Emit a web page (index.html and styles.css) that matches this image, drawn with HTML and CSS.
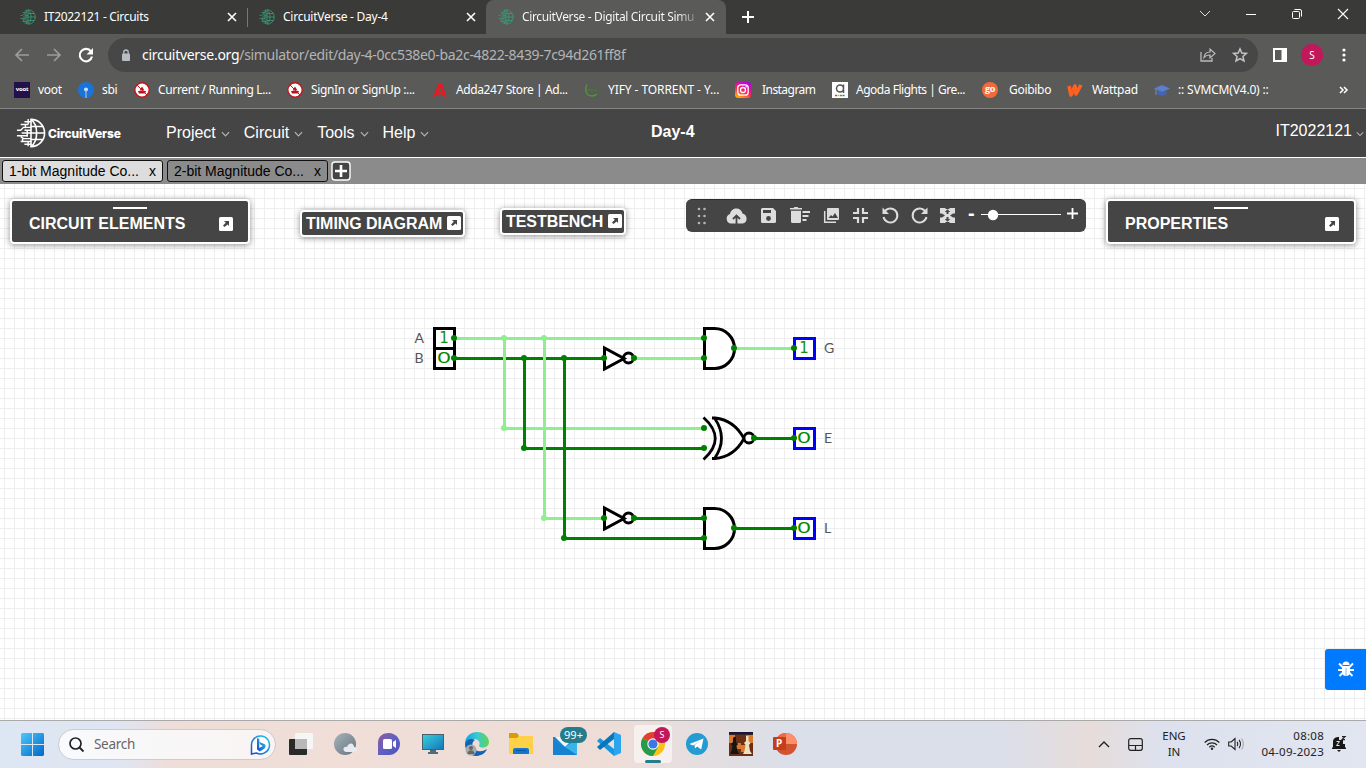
FILE: index.html
```html
<!DOCTYPE html>
<html lang="en">
<head>
<meta charset="utf-8">
<title>CircuitVerse - Digital Circuit Simulator</title>
<link rel="stylesheet" href="styles.css">
</head>
<body>
<svg class="defs" width="0" height="0">
  <symbol id="globe" viewBox="0 0 32 32">
    <g fill="none" stroke="currentColor" stroke-width="1.7">
      <path d="M16 1.5a14.5 14.5 0 0 1 0 29zM16 1.5c8 6 8 23 0 29M16 9h13M16 16h15M16 23h13"/>
      <path d="M16 4H9M13 7H5M16 10H8L5 13H1M16 13H9M16 16H6M12 19H1M16 22H8l-3-2M16 25H5M16 28H9M13 1v6M10 7v4M12 13v7M7 22v3M13 25v5" stroke-width="1.5"/>
    </g>
  </symbol>
  <symbol id="x" viewBox="0 0 10 10"><path d="M1 1l8 8M9 1L1 9" stroke="currentColor" stroke-width="1.6"/></symbol>
  <symbol id="chev" viewBox="0 0 10 6"><path d="M1 1l4 4 4-4" fill="none" stroke="currentColor" stroke-width="1.3"/></symbol>
  <symbol id="open" viewBox="0 0 14 14"><rect width="14" height="14" rx="1.5" fill="#fff"/><path d="M5 4h5v5L8.600 7.600 5.500 10 4 8.500 6.800 5.800z" fill="#454545"/></symbol>
  <symbol id="nosign" viewBox="0 0 16 16"><circle cx="8" cy="8" r="7.200" fill="#fff" stroke="#c4161c" stroke-width="1.400"/><path d="M4 9h8l-1 2.500H5zM5.500 8.500l2.500-4 2.500 4z" fill="#b5161b"/><path d="M3 3l10 10" stroke="#c4161c" stroke-width="1"/></symbol>
  <symbol id="not" viewBox="0 0 34 26"><path d="M2 2.500v21l19.500-10.500z" fill="#fff" stroke="#000" stroke-width="3"/><circle cx="26" cy="12.500" r="5" fill="none" stroke="#000" stroke-width="3"/></symbol>
  <symbol id="and" viewBox="0 0 34 44"><path d="M2.500 2.500h10a20 20 0 0 1 0 40h-10z" fill="#fff" stroke="#000" stroke-width="3"/></symbol>
</svg>

<div class="tabs">
  <div class="tab"><svg class="fav"><use href="#globe"/></svg><span class="tt t1">IT2022121 - Circuits</span><svg class="close"><use href="#x"/></svg></div>
  <div class="tab second"><svg class="fav"><use href="#globe"/></svg><span class="tt t2">CircuitVerse - Day-4</span><svg class="close"><use href="#x"/></svg></div>
  <div class="tab active"><svg class="fav"><use href="#globe"/></svg><span class="tt fade">CircuitVerse - Digital Circuit Simu</span><svg class="close"><use href="#x"/></svg></div>
  <svg class="newtab" viewBox="0 0 12 12"><path d="M6 0v12M0 6h12" stroke="#fff" stroke-width="2"/></svg>
  <div class="win">
    <svg width="12" height="8" viewBox="0 0 12 8"><path d="M1 1l5 5 5-5" fill="none" stroke="#ddd"/></svg>
    <svg width="10" height="10" viewBox="0 0 10 10"><path d="M0 5.500h10" stroke="#fff"/></svg>
    <svg width="10" height="10" viewBox="0 0 10 10"><rect x=".5" y="2.500" width="7" height="7" rx="1" fill="none" stroke="#fff"/><path d="M2.500 .5H8a1.500 1.500 0 0 1 1.500 1.500v5.500" fill="none" stroke="#fff"/></svg>
    <svg width="10" height="10" viewBox="0 0 10 10"><path d="M0 0l10 10M10 0L0 10" stroke="#fff" stroke-width="1.100"/></svg>
  </div>
</div>

<div class="nav">
  <svg class="arr" viewBox="0 0 16 14"><path d="M15 7H2M8 1L2 7l6 6" fill="none" stroke="#9c9c9b" stroke-width="1.700"/></svg>
  <svg class="arr" viewBox="0 0 16 14"><path d="M1 7h13M8 1l6 6-6 6" fill="none" stroke="#9c9c9b" stroke-width="1.700"/></svg>
  <svg class="arr" viewBox="0 0 16 16"><path d="M13 4.500A6.200 6.200 0 1 0 14 9.500" fill="none" stroke="#fff" stroke-width="2.100"/><path d="M15 1v6.500H8.500z" fill="#fff"/></svg>
  <div class="address">
    <svg width="8" height="12" viewBox="0 0 8 12"><rect y="4.500" width="8" height="7.500" rx="1" fill="#b9bcc1"/><path d="M1.800 5V3.200a2.200 2.200 0 0 1 4.400 0V5" fill="none" stroke="#b9bcc1" stroke-width="1.300"/></svg>
    <span class="url"><b>circuitverse.org</b>/simulator/edit/day-4-0cc538e0-ba2c-4822-8439-7c94d261ff8f</span>
    <svg class="share" width="16" height="14" viewBox="0 0 16 14"><path d="M1 4v9h11v-3" fill="none" stroke="#bbb" stroke-width="1.300"/><path d="M4 9.500c.5-4 3-5.500 6-5.500V1l5 4.500L10 10V7C7.500 7 5.500 7.500 4 9.500z" fill="none" stroke="#bbb" stroke-width="1.200"/></svg>
    <svg width="16" height="16" viewBox="0 0 16 16"><path d="M8 1.800l1.800 4.200 4.600.4-3.500 3 1.100 4.500L8 11.500l-4 2.400 1.100-4.500-3.500-3 4.600-.4z" fill="none" stroke="#c4c4c4" stroke-width="1.500"/></svg>
  </div>
  <svg class="side" viewBox="0 0 14 14"><path d="M0 0h14v14H0zM2 2v10h6.500V2z" fill="#fff" fill-rule="evenodd"/></svg>
  <span class="avatar">S</span>
  <svg class="dots" viewBox="0 0 4 14"><g fill="#fff"><circle cx="2" cy="2" r="1.600"/><circle cx="2" cy="7" r="1.600"/><circle cx="2" cy="12" r="1.600"/></g></svg>
</div>

<div class="bookmarks">
  <div class="bm"><span class="voot">voot</span><span>voot</span></div>
  <div class="bm"><svg viewBox="0 0 16 16"><circle cx="8" cy="8" r="8" fill="#1a73d9"/><circle cx="8" cy="7.500" r="2" fill="#cfe2f5"/><path d="M8 8v8" stroke="#a9bccf" stroke-width="1.200"/></svg><span>sbi</span></div>
  <div class="bm"><svg viewBox="0 0 16 16"><use href="#nosign"/></svg><span class="b3">Current / Running L...</span></div>
  <div class="bm"><svg viewBox="0 0 16 16"><use href="#nosign"/></svg><span class="b4">SignIn or SignUp :...</span></div>
  <div class="bm"><svg viewBox="0 0 16 16"><path d="M6.500 1h3.500l5 15-6.500-4L1 15.500zM8.500 6l-2 5 2-1 2.300 1z" fill="#e31b23" fill-rule="evenodd"/></svg><span class="b5">Adda247 Store | Ad...</span></div>
  <div class="bm"><svg viewBox="0 0 16 16"><path d="M3 2.500c-3 5-1 11.500 5 11.500 3 0 4-1 5-2" fill="none" stroke="#4b9a35" stroke-width="1.300"/><path d="M4 10V7l2 2V7M8 10V6M10 10l1-3 2 3" stroke="#427d30" fill="none"/></svg><span class="b6">YIFY - TORRENT - Y...</span></div>
  <div class="bm wide"><svg viewBox="0 0 16 16"><defs><linearGradient id="ig" x1="0.200" y1="1" x2=".7" y2="0"><stop stop-color="#ffb800"/><stop offset=".45" stop-color="#ff2458"/><stop offset="1" stop-color="#b900e6"/></linearGradient></defs><rect width="16" height="16" rx="3.500" fill="url(#ig)"/><g fill="none" stroke="#fff" stroke-width="1.300"><rect x="2.800" y="2.800" width="10.400" height="10.400" rx="3"/><circle cx="8" cy="8" r="2.500"/></g><circle cx="11.200" cy="4.800" r=".8" fill="#fff"/></svg><span class="b7">Instagram</span></div>
  <div class="bm"><svg viewBox="0 0 16 16"><rect width="16" height="16" fill="#fff"/><path d="M11.500 2.500v8.500M11.500 6.500a3.500 3.500 0 1 1-7 0 3.500 3.500 0 0 1 7 0z" fill="none" stroke="#555" stroke-width="1.500"/><path d="M3 13.500h2" stroke="#e33" stroke-width="1.500"/><path d="M5.500 13.500h2" stroke="#fa0" stroke-width="1.500"/><path d="M8 13.500h2" stroke="#3a4" stroke-width="1.500"/><path d="M10.500 13.500h2" stroke="#36c" stroke-width="1.500"/></svg><span class="b8">Agoda Flights | Gre...</span></div>
  <div class="bm wide"><span class="go">go</span><span>Goibibo</span></div>
  <div class="bm watt"><svg viewBox="0 0 16 16"><path d="M2 4l2 9 4-9 1 8 5-9" fill="none" stroke="#ff6122" stroke-width="3.600" stroke-linejoin="round"/></svg><span>Wattpad</span></div>
  <div class="bm"><svg viewBox="0 0 16 16"><path d="M0 6.500L8 3l8 3.500L8 10z" fill="#5b7ed0"/><path d="M3.500 8.500v3.500c2 2 7 2 9 0V8.500L8 10.500z" fill="#4465b4"/><path d="M2 7v6" stroke="#7c8baa"/></svg><span class="b11">:: SVMCM(V4.0) ::</span></div>
  <svg class="more" viewBox="0 0 10 8"><path d="M1 1l3 3-3 3M5 1l3 3-3 3" fill="none" stroke="#fff" stroke-width="1.500"/></svg>
</div>

<header class="header">
  <svg class="logo"><use href="#globe"/></svg><span class="brand">CircuitVerse</span>
  <nav class="menu"><span>Project<svg><use href="#chev"/></svg></span><span>Circuit<svg><use href="#chev"/></svg></span><span>Tools<svg><use href="#chev"/></svg></span><span>Help<svg><use href="#chev"/></svg></span></nav>
  <strong class="title">Day-4</strong>
  <span class="user">IT2022121<svg><use href="#chev"/></svg></span>
</header>

<div class="circuits">
  <div class="ctab current"><span>1-bit Magnitude Co...</span><span>x</span></div>
  <div class="ctab"><span>2-bit Magnitude Co...</span><span>x</span></div>
  <svg class="add" viewBox="0 0 20 20"><rect x="1" y="1" width="18" height="18" rx="3" fill="#454545" stroke="#fff" stroke-width="1.400"/><path d="M10 4v12M4 10h12" stroke="#fff" stroke-width="2.600"/></svg>
</div>

<main class="canvas">
  <svg class="circuit" width="1366" height="536" viewBox="0 184 1366 536">
    <g fill="none" stroke-width="3">
      <path stroke="#008000" d="M454 358.500H604M524 448.500H704"/>
      <path stroke="#90ee90" d="M454 338.500H704M504.500 338V428.500H704M544.500 338V518.500H604M634 358.500H704M734 348.500H794"/>
      <path stroke="#008000" d="M524.500 358V449M564.500 358V538.500H704M754 438.500H794M634 518.500H704M734 528.500H794"/>
    </g>
    <g fill="#fff" stroke="#000" stroke-width="3"><path d="M434.500 328.500h20v20h-20zM434.500 348.500h20v20h-20z"/></g>
    <path fill="#fff" stroke="#0000ff" stroke-width="3" d="M794.500 338.500h20v20h-20zM794.500 428.500h20v20h-20zM794.500 518.500h20v20h-20z"/>
    <use href="#not" x="602.500" y="345.500" width="34" height="26"/><use href="#not" x="602.500" y="505.500" width="34" height="26"/>
    <use href="#and" x="702" y="326" width="34" height="44"/><use href="#and" x="702" y="506" width="34" height="44"/>
    <path d="M712 418H715Q734 420 744 438.500Q734 457 715 458.500H712M714.500 418Q728.500 438.500 714.500 458.500M703.500 417.500Q727 438.500 703.500 459.500" fill="none" stroke="#000" stroke-width="2.800"/>
    <circle cx="749" cy="438" r="5" fill="#fff" stroke="#000" stroke-width="2.800"/>
    <g fill="#90ee90"><circle cx="504" cy="338" r="3"/><circle cx="544" cy="338" r="3"/><circle cx="504" cy="428" r="3"/><circle cx="544" cy="518" r="3"/></g>
    <g fill="#008000">
      <circle cx="454" cy="338" r="3"/><circle cx="454" cy="358" r="3"/><circle cx="524" cy="358" r="3"/><circle cx="564" cy="358" r="3"/><circle cx="524" cy="448" r="3"/><circle cx="564" cy="538" r="3"/>
      <circle cx="604" cy="358" r="3"/><circle cx="634" cy="358" r="3"/><circle cx="604" cy="518" r="3"/><circle cx="634" cy="518" r="3"/>
      <circle cx="704" cy="338" r="3"/><circle cx="704" cy="358" r="3"/><circle cx="704" cy="428" r="3"/><circle cx="704" cy="448" r="3"/><circle cx="704" cy="518" r="3"/><circle cx="704" cy="538" r="3"/>
      <circle cx="734" cy="348" r="3"/><circle cx="754" cy="438" r="3"/><circle cx="734" cy="528" r="3"/><circle cx="794" cy="348" r="3"/><circle cx="794" cy="438" r="3"/><circle cx="794" cy="528" r="3"/>
    </g>
    <g class="bits"><text x="444" y="343">1</text><text x="804" y="353">1</text></g>
    <g class="bits zero"><text x="437.500" y="363" textLength="13" lengthAdjust="spacingAndGlyphs">0</text><text x="797.500" y="443" textLength="13" lengthAdjust="spacingAndGlyphs">0</text><text x="797.500" y="533" textLength="13" lengthAdjust="spacingAndGlyphs">0</text></g>
    <g class="names"><text x="414.500" y="343">A</text><text x="414.500" y="363">B</text><text x="824" y="353">G</text><text x="824" y="443">E</text><text x="824" y="533">L</text></g>
  </svg>

  <section class="panel elements"><i></i><span>CIRCUIT ELEMENTS</span><svg><use href="#open"/></svg></section>
  <section class="panel small timing"><span>TIMING DIAGRAM</span><svg><use href="#open"/></svg></section>
  <section class="panel small bench"><span>TESTBENCH</span><svg><use href="#open"/></svg></section>
  <section class="quick">
    <svg width="10" height="18" viewBox="0 0 10 18" fill="#b5b5b5"><circle cx="2" cy="2" r="1.300"/><circle cx="7.500" cy="2" r="1.300"/><circle cx="2" cy="9" r="1.300"/><circle cx="7.500" cy="9" r="1.300"/><circle cx="2" cy="16" r="1.300"/><circle cx="7.500" cy="16" r="1.300"/></svg>
    <svg width="21" height="16" viewBox="0 0 21 16"><path d="M5 15.500a4.900 4.900 0 0 1-1-9.500C4.500 2.500 7.500 .5 10.500.5c3 0 5.500 2 6 5 5.500 1 5.500 10 0 10z" fill="#ddd"/><path d="M10.500 16V8M7 11L10.500 7.500l3.500 3.500" fill="none" stroke="#454545" stroke-width="1.800"/></svg>
    <svg width="15" height="15" viewBox="0 0 15 15"><path d="M1.500 0H12l3 3v10.500a1.500 1.500 0 0 1-1.500 1.500h-12A1.500 1.500 0 0 1 0 13.500v-12A1.500 1.500 0 0 1 1.500 0zM2 2v3h8V2z" fill="#ddd" fill-rule="evenodd"/><circle cx="7.500" cy="10.500" r="2.400" fill="#454545"/></svg>
    <svg width="20" height="15" viewBox="0 0 20 15" fill="#ddd"><path d="M0 0h3.500l1-1h3l1 1H12v1.500H0zM1 2.800h10V13.500A1.500 1.500 0 0 1 9.500 15h-7A1.500 1.500 0 0 1 1 13.500zM12.500 3H20v2h-7.500zM12.500 7H18.500v2h-6zM12.500 11h4v2h-4z"/></svg>
    <svg width="15" height="15" viewBox="0 0 15 15"><rect x="3" width="12" height="12" rx="1" fill="#ddd"/><path d="M.7 3v11.300H12" fill="none" stroke="#ddd" stroke-width="1.500"/><path d="M4.500 10l2.500-3 1.500 1.500L11 5l3 5z" fill="#454545"/></svg>
    <svg width="15" height="15" viewBox="0 0 15 15"><path d="M5 0v5H0M10 0v5h5M5 15v-5H0M10 15v-5h5" fill="none" stroke="#ddd" stroke-width="2.200"/></svg>
    <svg width="17" height="17" viewBox="0 0 17 17"><path d="M2 5.500A7 7 0 1 1 1.500 10" fill="none" stroke="#ddd" stroke-width="2"/><path d="M.5.500v6.500H7z" fill="#ddd"/></svg>
    <svg width="17" height="17" viewBox="0 0 17 17"><path d="M15 5.500A7 7 0 1 0 15.500 10" fill="none" stroke="#ddd" stroke-width="2"/><path d="M16.500.500v6.500H10z" fill="#ddd"/></svg>
    <svg width="15" height="15" viewBox="0 0 15 15"><path d="M0 0h15v15H0z" fill="#ddd"/><path d="M7.500 1.300l2.700 2.700H8.500v2h-2V4H4.800zM7.500 13.700L4.800 11h1.700V9h2v2h1.700zM0 5.500h2v4H0zM13 5.500h2v4h-2zM2 5.500l3 2-3 2zM13 5.500l-3 2 3 2zM5.500 0h4v1h-4zM5.500 14h4v1h-4z" fill="#454545"/></svg>
    <b>-</b>
    <svg width="80" height="12" viewBox="0 0 80 12"><path d="M0 6.500h80" stroke="#fff"/><circle cx="12" cy="7" r="5.200" fill="#fff"/></svg>
    <svg width="11" height="11" viewBox="0 0 11 11"><path d="M5.500 0v11M0 5.500h11" stroke="#fff" stroke-width="1.800"/></svg>
  </section>
  <section class="panel props"><i></i><span>PROPERTIES</span><svg><use href="#open"/></svg></section>
  <div class="bug"><svg width="16" height="16" viewBox="0 0 16 16"><path d="M4.500 4a3.500 3.500 0 0 1 7 0z" fill="#fff"/><path d="M4 5h8v6a4 4 0 0 1-8 0z" fill="#fff"/><path d="M1 2.500L4.500 6M15 2.500L11.500 6M0 9h16M1.500 15l3.500-3.500M14.500 15L11 11.500" stroke="#fff" stroke-width="1.900"/><path d="M8 7v8" stroke="#7dbbff"/></svg></div>
</main>

<footer class="taskbar">
  <svg class="start" viewBox="0 0 23 23"><defs><linearGradient id="w" gradientUnits="userSpaceOnUse" x1="0" y1="0" x2="23" y2="23"><stop stop-color="#4cc9fb"/><stop offset="1" stop-color="#0067c8"/></linearGradient></defs><path d="M1 0h10v11H0V1zM12 0h10l1 1v10H12zM0 12h11v11H1l-1-1zM12 12h11v10l-1 1H12z" fill="url(#w)"/></svg>
  <div class="search"><svg width="15" height="15" viewBox="0 0 15 15"><circle cx="6.500" cy="6.500" r="5.500" fill="none" stroke="#222" stroke-width="1.700"/><path d="M10.500 10.500l4 4" stroke="#222" stroke-width="1.800"/></svg><span>Search</span>
    <svg class="bing" width="21" height="21" viewBox="0 0 21 21"><defs><linearGradient id="bg" x1="1" y1="0" x2="0" y2="1"><stop stop-color="#22c8e8"/><stop offset="1" stop-color="#1849cf"/></linearGradient></defs><path d="M1.500 20v-8.500a9 9 0 1 1 5 7.500z" fill="#fff" stroke="url(#bg)" stroke-width="1.500"/><path d="M7 4l2.300 1v9l3.500-2-2.500-1.500-1-2.500 5 2c2 1 1.500 4-.5 5l-4 2.500-2.800-2z" fill="url(#bg)"/></svg></div>
  <div class="apps">
    <div><svg viewBox="0 0 24 24"><rect y="7" width="18" height="16" rx="1" fill="#292b2a"/><rect x="6" y="1" width="18" height="16" rx="1" fill="#f6f6f6"/><path d="M6 7h12v10H6z" fill="#b8b8b8"/></svg></div>
    <div><svg viewBox="0 0 24 24"><defs><linearGradient id="moon" x1="0" y1="0" x2="1" y2="1"><stop stop-color="#a8b4bc"/><stop offset="1" stop-color="#66727d"/></linearGradient></defs><circle cx="12" cy="12" r="11" fill="url(#moon)"/><path d="M13 20c-4-1-3-6 1-5 2-5 7-4 7 0 4 0 4 5 0 5z" fill="#e7eaf0"/></svg></div>
    <div><svg viewBox="0 0 24 24"><defs><linearGradient id="ch" x1="0" y1="0" x2="1" y2="1"><stop stop-color="#91599d"/><stop offset=".5" stop-color="#6261c1"/><stop offset="1" stop-color="#4b50c6"/></linearGradient></defs><path d="M1 23V11C1 4 6 1 12 1s11 5 11 11-5 11-11 11z" fill="url(#ch)"/><rect x="6" y="7" width="9" height="10" rx="1.500" fill="#fff"/><path d="M16 10l3-2v8l-3-2z" fill="#fff"/></svg></div>
    <div><svg viewBox="0 0 24 24"><defs><linearGradient id="mon" x1="0" y1="0" x2="1" y2="1"><stop stop-color="#38d2dc"/><stop offset="1" stop-color="#1475b9"/></linearGradient></defs><rect x="1.500" y="2.500" width="21" height="15" fill="url(#mon)" stroke="#49606d"/><path d="M9 18h6v2h2v2H7v-2h2z" fill="#526b79"/></svg></div>
    <div><svg viewBox="0 0 24 24"><defs><linearGradient id="ed" x1="0" y1="0" x2="1" y2="0"><stop stop-color="#169fdb"/><stop offset=".5" stop-color="#38c9d5"/><stop offset="1" stop-color="#63d451"/></linearGradient></defs><path d="M0 12C0 4 6 0 12 0c7 0 12 5 12 10 0 6-8 7-10 4 2-4-1-7-5-7-5 0-9 3-9 5z" fill="url(#ed)"/><path d="M0 12c1-5 7-6 10-4-4 2-4 10 3 11 4 1 7-1 9-2-2 5-7 7-11 7C5 24 0 19 0 12z" fill="#1263b4"/><circle cx="6" cy="18" r="5.500" fill="#aaa"/><circle cx="6" cy="16" r="2" fill="#666"/><path d="M2.500 22c0-5 7-5 7 0z" fill="#666"/></svg></div>
    <div><svg viewBox="0 0 24 24"><path d="M0 1h8l2 3v6H0z" fill="#d99b06"/><path d="M0 6h8l2-2h14v18H0z" fill="#ffd148"/><path d="M4 22v-4a2 2 0 0 1 2-2h12a2 2 0 0 1 2 2v4z" fill="#1477ce"/><path d="M7 18.500h10" stroke="#0b559e"/></svg></div>
    <div class="mail"><svg viewBox="0 0 24 24"><path d="M0 5h24v18H0z" fill="#1684cf"/><path d="M2 5h20l-10 10z" fill="#f4f4f4"/><path d="M0 7l12 8 12-8v16H0z" fill="#35b5ec"/><path d="M0 7l24 16H0z" fill="#1682d0"/></svg><em>99+</em></div>
    <div><svg viewBox="0 0 24 24"><path d="M17 17L3 6 0 9l17 15z" fill="#1697df"/><path d="M17 0v7L3 18l-3-3z" fill="#0876ba"/><path d="M17 0l7 3v18l-7 3z" fill="#2ba5ed"/></svg></div>
    <div class="chrome"><svg viewBox="0 0 24 24"><circle cx="12" cy="12" r="12" fill="#fbc116"/><path d="M12 12L1.600 6A12 12 0 0 1 22.400 6z" fill="#e43e33"/><path d="M12 12L1.600 6A12 12 0 0 0 12 24l5-9z" fill="#279b4b"/><circle cx="12" cy="12" r="5.700" fill="#fff"/><circle cx="12" cy="12" r="4.600" fill="#3978e5"/></svg><em>S</em></div>
    <div><svg viewBox="0 0 24 24"><circle cx="12" cy="12" r="11" fill="#249bd3"/><path d="M4.500 12L18.500 6.500l-2.300 11-4-3-2.200 2-.5-3.500 6-4-7.500 4.500z" fill="#fff"/></svg></div>
    <div><svg viewBox="0 0 24 24"><path d="M0 0h24v24H0z" fill="#693017"/><path d="M0 3h6v8H0zM6 11h6v6H6zM17 3h7v8h-7zM12 13h6v7h-6z" fill="#d97a30"/><path d="M0 0h24v2.500H0z" fill="#15183a"/><path d="M5 5h2v5l2 2-1.500 2 1 5 2 3H1l1.500-3 1-5L2 12l2-2V6z" fill="#171512"/><path d="M17 4h2.500v5l2 2-1.500 2 1 6 2 3h-9l1.500-3 1-6-1.500-2 2-2z" fill="#eee1bf"/></svg></div>
    <div><svg viewBox="0 0 24 24"><circle cx="13" cy="12" r="11" fill="#d35230"/><path d="M13 1a11 11 0 0 1 11 11H13z" fill="#ff8f6b"/><path d="M2 12h11V1A11 11 0 0 0 2 12z" fill="#ed6c47"/><rect y="5" width="13" height="13" rx="1" fill="#c43e1c"/></svg><b class="pp">P</b></div>
  </div>
  <div class="tray">
    <svg class="up" viewBox="0 0 12 8"><path d="M1 7l5-5 5 5" fill="none" stroke="#222" stroke-width="1.400"/></svg>
    <svg class="pad" viewBox="0 0 15 13"><rect x=".7" y=".7" width="13.600" height="11.600" rx="2" fill="none" stroke="#222" stroke-width="1.200"/><path d="M1 7.500h13M7.500 7.500V12" stroke="#222" stroke-width="1.200"/></svg>
    <div class="lang">ENG<br>IN</div>
    <svg class="wifi" viewBox="0 0 16 12"><g fill="none" stroke="#222" stroke-width="1.200"><path d="M.7 4.500a10 10 0 0 1 14.600 0M3 7a7 7 0 0 1 10 0M5.300 9.200a4 4 0 0 1 5.400 0"/></g><circle cx="8" cy="10.700" r="1.200" fill="#222"/></svg>
    <svg class="vol" viewBox="0 0 16 14"><g fill="none" stroke="#222" stroke-width="1.100"><path d="M.7 5h2.500L7 1.500v11L3.200 9H.7zM9 5c1 1 1 3 0 4M11 3c2 2 2 6 0 8"/><path d="M13.500 1.500c2.500 3 2.500 8 0 11" stroke="#aaa"/></g></svg>
    <div class="clock">08:08<br>04-09-2023</div>
    <svg class="bell" viewBox="0 0 14 16"><path d="M1 11V6c0-4 3-5 6-5v3h4v4h2v3l1 1v1H0v-1z" fill="#171717"/><path d="M5 14h4l-2 2z" fill="#171717"/><path d="M10 .7h3l-3 3h3" fill="none" stroke="#222" stroke-width="1.200"/><path d="M4.500 5.500h3l-3 4h3" fill="none" stroke="#e5e8f0"/></svg>
  </div>
</footer>
</body>
</html>
```
FILE: styles.css
```css
* { box-sizing: border-box; }
body { margin: 0; width: 1366px; height: 768px; overflow: hidden; display: flex; flex-direction: column; font: 12px "Noto Sans", "Open Sans", sans-serif; color: #fff; }
svg { display: block; flex: none; overflow: visible; }
.defs { position: absolute; }

.tabs { height: 34px; flex: none; background: #3a3a38; display: flex; align-items: center; }
.tab { width: 248px; height: 34px; display: flex; align-items: center; padding-left: 20px; border-right: 1px solid #3a3a38; }
.tab:first-child { background: linear-gradient(#777, #777) right 8px / 1px 19px no-repeat; border: 0; }
.tab.second { width: 238px; padding-left: 11px; border: 0; }
.tab.active { width: 240px; padding-left: 12px; background: #5a5a58; border: 0; border-radius: 8px 8px 0 0; }
.fav { width: 16px; height: 16px; color: #3b9a74; margin-right: 8px; }
.tt { width: 178px; margin-right: 5px; padding-bottom: 1px; white-space: nowrap; letter-spacing: -.35px; }
.t1 { letter-spacing: -.3px; }
.t2 { letter-spacing: -.25px; }
.fade { background: linear-gradient(90deg, #fff 155px, #70706e 176px); -webkit-background-clip: text; background-clip: text; color: transparent; }
.close { width: 10px; height: 10px; }
.newtab { width: 12px; height: 12px; margin-left: 16px; }
.win { margin-left: auto; width: 184px; height: 28px; display: grid; grid-template-columns: repeat(4, 46px); place-items: center; align-self: flex-start; }

.nav { height: 38px; flex: none; background: #5a5a58; display: flex; align-items: center; padding: 4px 0 0 14px; }
.arr { width: 16px; height: 16px; margin-right: 16px; }
.arr + .arr + .arr { margin-right: 14px; }
.address { width: 1150px; height: 34px; border-radius: 17px; background: #474747; display: flex; align-items: center; padding: 0 10px 0 14px; }
.url { flex: 1; margin-left: 12px; padding-bottom: 1px; font-size: 14px; letter-spacing: -.32px; color: #b4b4b4; }
.url b { color: #fff; font-weight: 400; letter-spacing: -.28px; }
.share { margin-right: 16px; }
.side { width: 14px; height: 14px; margin: 0 14px 0 15px; }
.avatar { width: 22px; height: 22px; border-radius: 50%; background: #c2185b; display: grid; place-items: center; font-size: 10px; }
.dots { width: 4px; height: 14px; margin-left: 19px; }

.bookmarks { height: 37px; flex: none; background: #5a5a58; border-bottom: 1px solid #858583; padding-left: 14px; display: grid; grid-template-columns: 64px 56px 153px 145px 152px 151px 97px 150px 85px 87px 185px 10px; align-items: center; }
.bm { display: flex; align-items: center; gap: 8px; white-space: nowrap; letter-spacing: -.3px; }
.bm > svg { width: 16px; height: 16px; }
.bm > span:last-child { padding-bottom: 1px; }
.bm.wide { gap: 11px; }
.bm.watt { gap: 9px; }
.b3, .b4 { letter-spacing: -.35px; }
.b5 { letter-spacing: -.4px; }
.b6 { letter-spacing: -.08px; }
.b7 { letter-spacing: -.55px; }
.b8 { letter-spacing: -.48px; }
.b11 { letter-spacing: -.18px; }
.more { width: 10px; height: 8px; }
.voot { width: 16px; height: 16px; background: #21104a; font: bold 6px/15px "Open Sans", sans-serif; text-align: center; letter-spacing: -.2px; }
.go { width: 16px; height: 16px; border-radius: 50%; background: #f26a3c; font: bold 9px/14px "Open Sans", sans-serif; text-align: center; }

.header { height: 48px; flex: none; background: #454545; display: flex; align-items: center; padding-left: 16px; font-family: "Liberation Sans", Arial, sans-serif; font-size: 16px; }
.logo { width: 30px; height: 30px; }
.brand { width: 118px; margin-left: 2px; font: 800 12px Inter, sans-serif; letter-spacing: -.15px; }
.menu { display: flex; gap: 13px; width: 486px; }
.menu span, .user { display: flex; align-items: center; }
.menu svg, .user svg { width: 9px; height: 6px; color: #b5b5b5; margin: 2px 0 0 5px; }
.menu span { padding-right: 1px; }
.title { padding-bottom: 2px; margin-left: -1px; }
.user { margin-left: auto; padding-bottom: 5px; }
.user svg { margin: 6px 2px 0 4px; width: 8px; }

.circuits { height: 27px; flex: none; background: #8b8b8b; border-top: 1px solid #fff; display: flex; align-items: center; padding: 0 0 0 2px; gap: 4px; font: 14px "Liberation Sans", Arial, sans-serif; color: #000; }
.ctab { width: 161px; height: 22px; border: 1px solid #111; border-radius: 3px; display: flex; align-items: center; justify-content: space-between; padding: 0 6px; }
.current { background: #ddd; }
.add { width: 20px; height: 20px; margin-left: -1px; }

.canvas { position: relative; height: 536px; flex: none; background: repeating-linear-gradient(90deg, transparent 0 4px, #eee 4px 5px, transparent 5px 10px), repeating-linear-gradient(transparent 0 4px, #eee 4px 5px, transparent 5px 10px), #fff; }
.bits { font: 15px "DejaVu Sans", sans-serif; fill: #159015; text-anchor: middle; }
.zero { text-anchor: start; font: 14.500px Lato, sans-serif; fill: #008a00; }
.names { font: 14px Lato, sans-serif; fill: #555; }
.panel { position: absolute; background: #454545; border: 2px solid #fff; border-radius: 4px; box-shadow: 0 1px 6px rgba(0,0,0,.45); font: bold 16px "Liberation Sans", Arial, sans-serif; display: flex; align-items: center; justify-content: space-between; padding: 4px 15px 0 17px; white-space: nowrap; }
.panel svg { width: 14px; height: 14px; }
.panel i { position: absolute; width: 34px; height: 2px; background: #fff; left: 101px; top: 6px; }
.elements { left: 10px; top: 15px; width: 240px; height: 45px; }
.props { left: 1106px; top: 15px; width: 250px; height: 45px; padding-right: 15px; }
.props i { left: 106px; }
.small { height: 27px; padding: 0 2px 0 4px; border-radius: 4px; }
.small svg { margin-bottom: 1px; }
.timing { left: 300px; top: 26px; width: 165px; }
.bench { left: 500px; top: 24px; width: 126px; }
.small span { letter-spacing: -.05px; }
.quick { position: absolute; left: 686px; top: 15px; width: 400px; height: 33px; background: #454545; border-top: 1px solid #2d2d2d; border-radius: 6px; display: flex; align-items: center; padding: 0 8px 1px 11px; }
.quick svg:nth-child(1) { margin-right: 19px; }
.quick svg:nth-child(2) { margin-right: 14px; }
.quick svg:nth-child(3), .quick svg:nth-child(4), .quick svg:nth-child(5), .quick svg:nth-child(6) { margin-right: 14px; }
.quick svg:nth-child(7) { margin-right: 12px; }
.quick svg:nth-child(8) { margin-right: 12px; }
.quick svg:nth-child(9) { margin-right: 13px; }
.quick b { width: 13px; font: bold 20px/20px "Liberation Sans", sans-serif; padding-bottom: 5px; }
.quick svg:nth-child(11) { margin: 0 6px 4px 0; }
.quick svg:nth-child(12) { margin-bottom: 4px; }
.bug { position: absolute; right: 0; top: 465px; width: 41px; height: 41px; padding-bottom: 2px; border-radius: 3px 0 0 3px; background: #007bff; display: grid; place-items: center; }

.taskbar { height: 48px; flex: none; border-top: 1px solid #aaa; background: linear-gradient(90deg, #dde7f3 0, #dfe5f2 120px, #eeddd8 170px, #f0ded7 340px, #eeddd7 610px, #dbdfe9 790px, #dadfe9 1000px, #e7dcda 1090px, #dce1ed 1160px, #e1e6f1 1366px); display: flex; align-items: center; color: #222; padding: 0 0 1px 21px; }
.start { width: 23px; height: 23px; margin-right: 14px; }
.search { width: 218px; height: 31px; border-radius: 16px; border: 1px solid #d2c9cb; background: linear-gradient(90deg, #f8fafd, #f8f4f3); display: flex; align-items: center; padding: 0 4px 0 10px; margin-right: 3px; font-size: 13.500px; color: #666; }
.search span { margin-left: 10px; flex: 1; letter-spacing: -.3px; padding-bottom: 1px; }
.apps { display: flex; height: 46px; }
.apps > div { width: 44px; display: grid; place-items: center; position: relative; }
.apps svg { width: 24px; height: 24px; }
.apps em { position: absolute; font-style: normal; color: #fff; }
.mail em { left: 17px; top: 6px; width: 27px; height: 16px; border-radius: 8px; background: #247c8c; font-size: 11px; line-height: 16px; text-align: center; }
.chrome::before { content: ""; position: absolute; left: 3px; top: 4px; width: 38px; height: 38px; border-radius: 4px; background: #f6f0ee; }
.chrome svg { position: relative; }
.chrome::after { content: ""; position: absolute; left: 14px; bottom: 4px; width: 16px; height: 3px; border-radius: 2px; background: #247c8c; }
.chrome em { left: 23px; top: 6px; width: 16px; height: 16px; border-radius: 50%; background: #c2185b; font-size: 9px; line-height: 16px; text-align: center; }
.pp { position: absolute; left: 13px; top: 16px; font-size: 10px; line-height: 13px; color: #fff; }
.tray { margin-left: auto; display: flex; align-items: center; padding-right: 20px; font-size: 11.500px; line-height: 16px; }
.up { width: 12px; height: 8px; margin-right: 18px; }
.pad { width: 15px; height: 13px; margin-right: 16px; }
.lang { width: 30px; text-align: center; margin-right: 15px; }
.wifi { width: 16px; height: 12px; margin-right: 8px; }
.vol { width: 16px; height: 14px; margin-right: 15px; }
.clock { width: 65px; text-align: right; white-space: nowrap; letter-spacing: .25px; margin-right: 8px; }
.bell { width: 14px; height: 16px; }
```
